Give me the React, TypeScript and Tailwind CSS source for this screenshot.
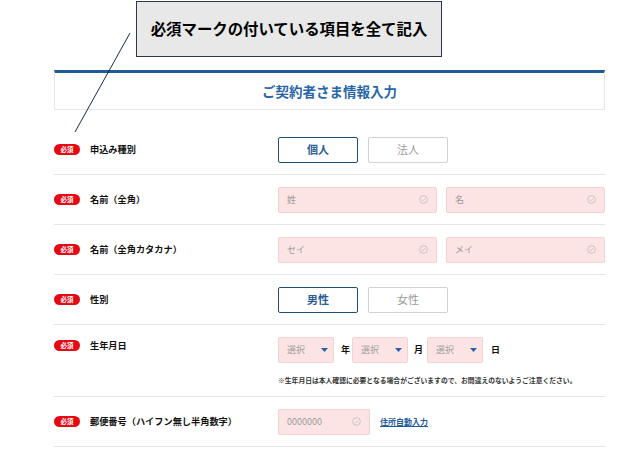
import type { ReactNode } from 'react';

const jp = { fontFamily: '"Noto Sans CJK JP", "Noto Sans", sans-serif' };

function RequiredBadge() {
  return (
    <span className="w-[26px] h-[11px] rounded-full bg-[#e50914] text-white text-[6.5px] font-bold leading-none flex items-center justify-center flex-shrink-0">
      必須
    </span>
  );
}

function CheckIcon() {
  return (
    <svg width="9" height="9" viewBox="0 0 10 10" className="flex-shrink-0">
      <circle cx="5" cy="5" r="4.3" fill="none" stroke="#bdbdbd" strokeWidth="0.9" />
      <path d="M3 5.1 L4.4 6.4 L7 3.7" fill="none" stroke="#bdbdbd" strokeWidth="0.9" />
    </svg>
  );
}

function TextField({ placeholder, width }: { placeholder: string; width: string }) {
  return (
    <div
      className={`${width} h-[26px] rounded-[2px] border border-[#f4d2d2] bg-[#fde4e4] flex items-center justify-between pl-[8px] pr-[8px]`}
    >
      <span className="text-[9px] text-[#9a9a9a]">{placeholder}</span>
      <CheckIcon />
    </div>
  );
}

function SelectField() {
  return (
    <div className="w-[56px] h-[26px] rounded-[2px] border border-[#f4d2d2] bg-[#fde4e4] flex items-center justify-between pl-[8px] pr-[5px]">
      <span className="text-[9px] text-[#a0a0a0]">選択</span>
      <svg width="7" height="4" viewBox="0 0 7 4">
        <path d="M0 0 H7 L3.5 4 Z" fill="#2a5ea3" />
      </svg>
    </div>
  );
}

function Toggle({ label, selected }: { label: string; selected?: boolean }) {
  return (
    <div
      className={`w-[80px] h-[26px] rounded-[2px] flex items-center justify-center text-[11px] ${
        selected
          ? 'border-[1.5px] border-[#1f4e7d] text-[#2b5d92] font-bold'
          : 'border-[1.5px] border-[#d2d2d2] text-[#9b9b9b]'
      }`}
    >
      {label}
    </div>
  );
}

function Row({ label, children, top = false }: { label: string; children: ReactNode; top?: boolean }) {
  return (
    <div className={`flex ${top ? 'items-start' : 'items-center'} py-[11.5px] border-b border-[#e6e6e6]`}>
      <div className={`w-[224px] flex items-center gap-[10px] flex-shrink-0 ${top ? 'pt-[2px]' : ''}`}>
        <RequiredBadge />
        <span className="text-[9.2px] font-bold text-[#111]">{label}</span>
      </div>
      <div className="flex-1">{children}</div>
    </div>
  );
}

export default function App() {
  return (
    <div className="relative w-[641px] h-[461px] bg-white overflow-hidden" style={jp}>
      {/* Callout */}
      <div className="ml-[136px] mt-[1px] w-[306px] h-[56px] bg-[#e8e8e8] border border-[#2c3650] flex items-center justify-center">
        <span className="text-[15.4px] font-bold text-black">必須マークの付いている項目を全て記入</span>
      </div>

      {/* Form */}
      <div className="ml-[54px] mt-[13px] w-[551px]">
        <div className="h-[40px] border-t-[3px] border-t-[#1f5b98] border-x border-b border-[#e6e6e6] flex items-center justify-center">
          <span className="text-[13.5px] font-bold text-[#2866a8]">ご契約者さま情報入力</span>
        </div>

        <div className="mt-[15px]">
          <Row label="申込み種別">
            <div className="flex gap-[10px]">
              <Toggle label="個人" selected />
              <Toggle label="法人" />
            </div>
          </Row>
          <Row label="名前（全角）">
            <div className="flex gap-[9px]">
              <TextField placeholder="姓" width="w-[159px]" />
              <TextField placeholder="名" width="w-[159px]" />
            </div>
          </Row>
          <Row label="名前（全角カタカナ）">
            <div className="flex gap-[9px]">
              <TextField placeholder="セイ" width="w-[159px]" />
              <TextField placeholder="メイ" width="w-[159px]" />
            </div>
          </Row>
          <Row label="性別">
            <div className="flex gap-[10px]">
              <Toggle label="男性" selected />
              <Toggle label="女性" />
            </div>
          </Row>
          <Row label="生年月日" top>
            <div className="flex items-center">
              <SelectField />
              <span className="text-[9px] font-bold text-[#111] ml-[7px] mr-[2px]">年</span>
              <SelectField />
              <span className="text-[9px] font-bold text-[#111] ml-[6px] mr-[4px]">月</span>
              <SelectField />
              <span className="text-[9px] font-bold text-[#111] ml-[8px]">日</span>
            </div>
            <p className="mt-[12px] text-[6.8px] font-semibold text-[#333] whitespace-nowrap">
              ※生年月日は本人確認に必要となる場合がございますので、お間違えのないようご注意ください。
            </p>
          </Row>
          <Row label="郵便番号（ハイフン無し半角数字）">
            <div className="flex items-center gap-[10px]">
              <TextField placeholder="0000000" width="w-[92px]" />
              <a className="text-[8px] font-bold text-[#1f5b98] underline">住所自動入力</a>
            </div>
          </Row>
        </div>
      </div>

      {/* Pointer line from callout to badge */}
      <svg className="absolute left-0 top-0 pointer-events-none" width="641" height="461">
        <line x1="130" y1="33" x2="75" y2="132" stroke="#1b2a4a" strokeWidth="1" />
      </svg>
    </div>
  );
}
